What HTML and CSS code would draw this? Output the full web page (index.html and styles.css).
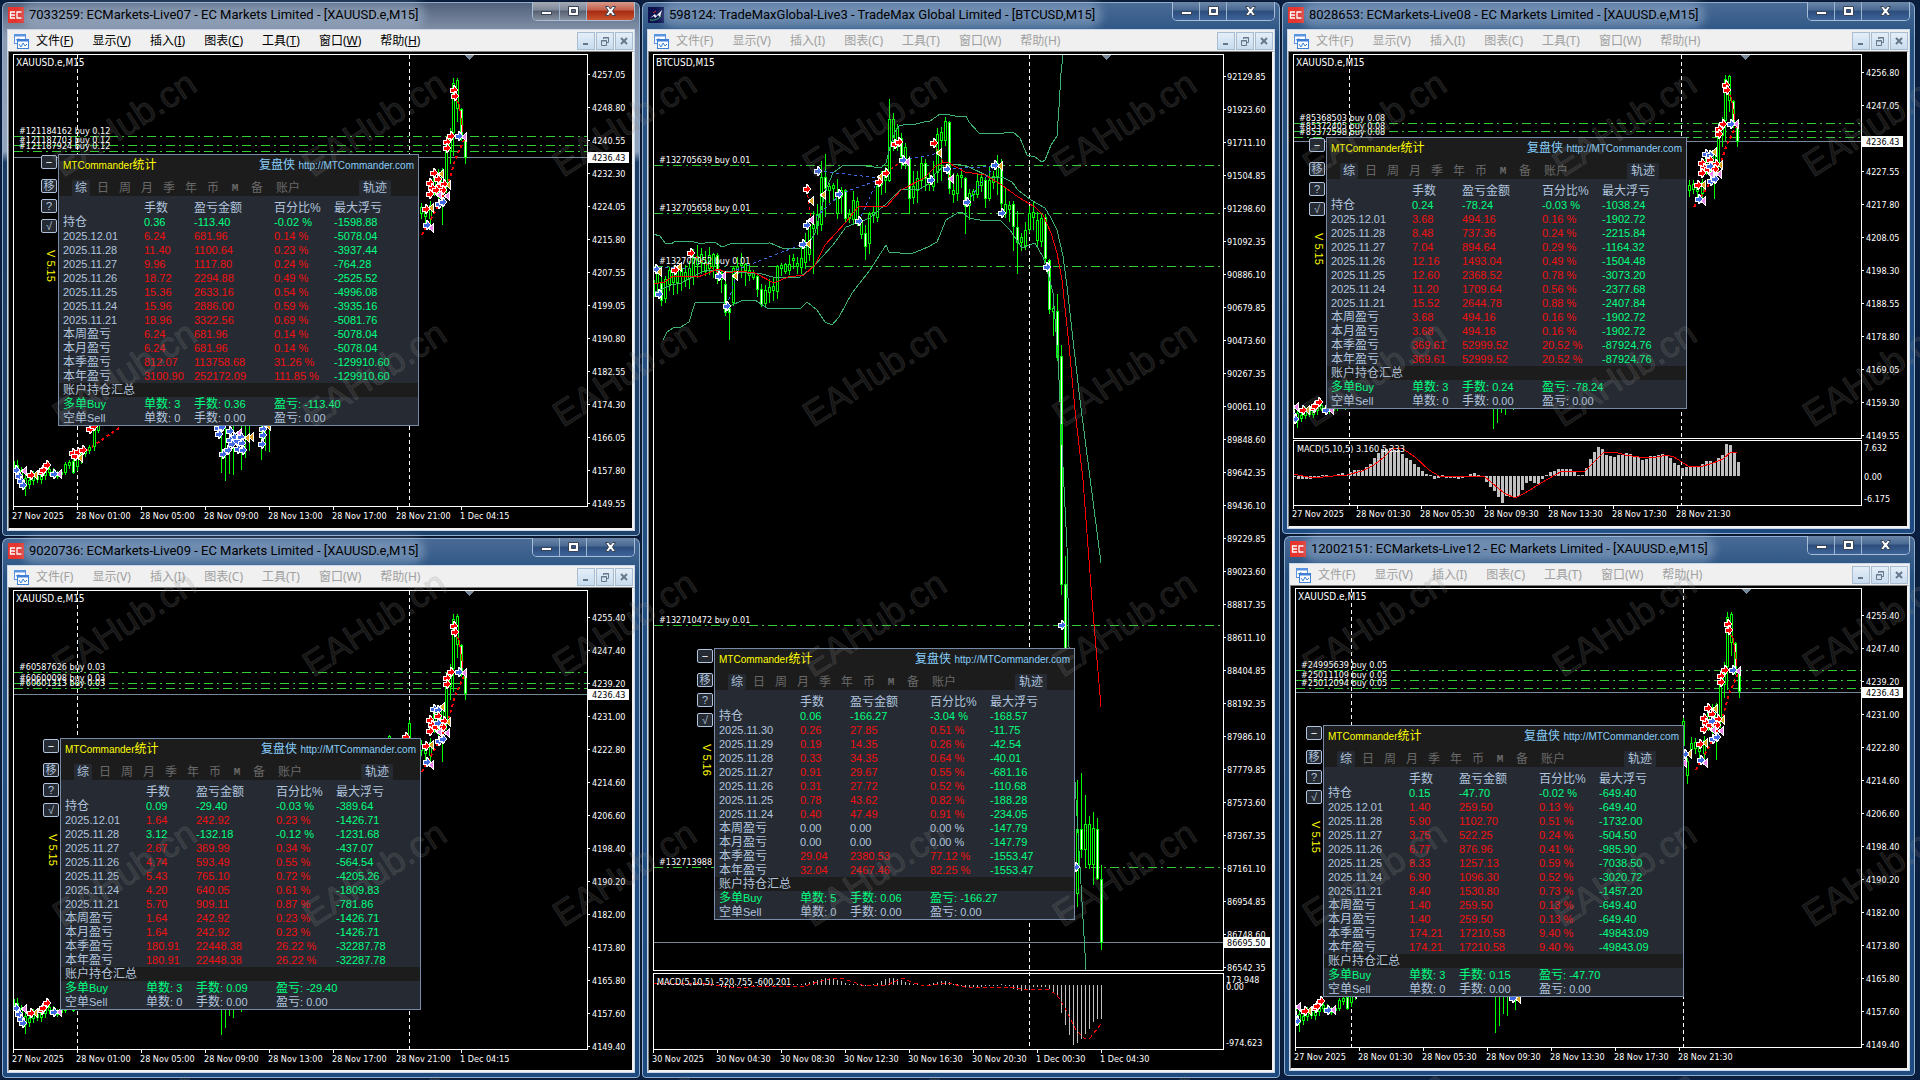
FILE: index.html
```html
<!DOCTYPE html>
<html lang="zh-CN">
<head>
<meta charset="utf-8">
<title>MetaTrader 4 - MTCommander</title>
<link rel="stylesheet" href="styles.css">
</head>
<body>
<main class="desktop">
  <div class="column" id="column-left"></div>
  <div class="column" id="column-middle"></div>
  <div class="column" id="column-right"></div>
</main>
<svg class="watermark" id="watermark" aria-hidden="true"></svg>
<script src="script.js"></script>
</body>
</html>
```
FILE: styles.css
```css
* { box-sizing: border-box; }

body {
  margin: 0;
  background: #0a1f3f;
  font-family: "Noto Sans", "Noto Sans CJK SC", sans-serif;
  font-size: 12px;
}

button { font: inherit; margin: 0; padding: 0; border: 0; background: none; color: inherit; }

/* desktop */
.desktop {
  display: grid;
  grid-template-columns: 640fr 640fr 635fr;
  min-height: 100vh;
  padding: 1px 4px 1px 1px;
  overflow: hidden;
}
.column { display: flex; flex-direction: column; min-width: 0; }

/* window frame */
.window {
  display: flex;
  flex-direction: column;
  min-width: 0;
  padding: 0 5px 5px;
  border: 1px solid #0b1930;
  border-radius: 7px 7px 5px 5px;
  background: linear-gradient(180deg, #4a6b96 0, #26507f 40px, #1e4a80 100%);
  box-shadow: inset 0 0 0 1px #8fb0d2;
}
.window.active { background: linear-gradient(180deg, #51607a 0, #8b9ab0 34px, #93a5bd 28%, #1d3c63 30%, #1f4169 100%); }
.win-live07 { flex: 536 1 0; }
.win-live09 { flex: 542 1 0; }
.win-live3 { flex: 1 1 0; }
.win-live08 { flex: 534 1 0; }
.win-live12 { flex: 542 1 0; margin-left: 2px; margin-bottom: 2px; }

.titlebar { display: flex; align-items: flex-start; height: 27px; }
.app-icon { width: 16px; height: 16px; margin: 5px 0 0 1px; flex: none; }
.title {
  margin: 7px 0 0 5px;
  font-family: Roboto, "Noto Sans", sans-serif;
  font-size: 13px;
  font-weight: 400;
  line-height: 12px;
  white-space: nowrap;
  color: #000;
  border-radius: 6px;
  background: rgba(180, 200, 225, .4);
  box-shadow: 0 0 8px 7px rgba(180, 200, 225, .4);
}
.caption {
  display: flex;
  margin-left: auto;
  border: 1px solid #a8bdd6;
  border-top: 0;
  border-radius: 0 0 5px 5px;
  overflow: hidden;
}
.caption button {
  width: 27px;
  height: 18px;
  background: linear-gradient(180deg, #6c86a8 0, #4a6a93 45%, #2c4d7c 50%, #3e649a 100%);
  border-right: 1px solid #9db4cf;
}
.caption .close { width: 47px; border-right: 0; }
.active .caption button { background: linear-gradient(180deg, #a5abb6 0, #7e8796 45%, #565f70 50%, #8690a1 100%); }
.active .caption .close { background: linear-gradient(180deg, #d99a8c 0, #c25e48 45%, #a52a12 50%, #c9542e 100%); }
.caption svg { display: block; margin: auto; }

.client {
  display: flex;
  flex-direction: column;
  flex: 1;
  border: 1px solid #c9d8e8;
  background: #000;
}

/* menu bar */
.menubar {
  display: flex;
  align-items: center;
  height: 21px;
  padding: 0 1px 0 5px;
  background: #f0f0f0;
  color: #a0a0a0;
  line-height: 18px;
}
.menu-icon { width: 16px; height: 16px; margin-right: 7px; flex: none; }
.menus { display: flex; gap: 19px; white-space: nowrap; }
.active .menubar { color: #000; }
.active .menus u { text-decoration: underline; }
.menus u { text-decoration: none; }
.mdi { display: flex; gap: 1px; margin-left: auto; }
.mdi button {
  width: 18px;
  height: 18px;
  border: 1px solid #a9bdd2;
  background: linear-gradient(180deg, #e4eef8, #c9dcee);
}
.mdi svg { display: block; margin: auto; }

/* chart area */
.chart {
  position: relative;
  flex: 1;
  border: solid #808080;
  border-width: 1px 2px 2px 1px;
  border-right-color: #f2f2f2;
  border-bottom-color: #f2f2f2;
  background: #000;
}
.plot {
  position: absolute;
  inset: 0;
  width: 100%;
  height: 100%;
  font-family: "DejaVu Sans Condensed", "DejaVu Sans", sans-serif;
  font-stretch: condensed;
  font-size: 9px;
}
.plot text { fill: #fff; }
.plot .tag-text { fill: #000; }
.plot .symbol { font-size: 10px; }
.edge { fill: none; stroke: #fff; }
.period { stroke: #fff; stroke-dasharray: 4 3; }
.order { stroke: #32cd32; stroke-dasharray: 9 4 2 4; }
.bid { stroke: #778899; }
.tag { fill: #fff; }
.wick { stroke: #0f0; }
.body { stroke: #0f0; fill: #000; }
.body.down { fill: #fff; }
.band, .average, .signal { fill: none; stroke-width: 1; }
.band { stroke: #3cb371; }
.average, .signal { stroke: #f00; }
.dashed { stroke-dasharray: 4 3; }
.trail { fill: none; stroke-dasharray: 3 3; }
.bar { fill: #c0c0c0; }

/* statistics panel */
.tool {
  position: absolute;
  display: flex;
  align-items: flex-start;
  gap: 1px;
  font-family: "Liberation Sans", "Noto Sans CJK SC", sans-serif;
  color: #b0c4de;
}
.side { display: flex; flex-direction: column; gap: 6px; width: 16px; padding-top: 1px; }
.side button {
  width: 16px;
  height: 14px;
  border: 1px solid #b0c4de;
  border-radius: 2px;
  background: #262b33;
  font-size: 11px;
  line-height: 11px;
}
.side .fold { margin-bottom: 4px; color: #fff; }
.version { margin: 11px 0 0 3px; writing-mode: vertical-rl; font-size: 11px; line-height: 12px; color: #ff0; white-space: nowrap; }
.panel { width: 361px; border: 1px solid #778ba8; background: #262b33; }
.panel-head { height: 41px; background: #1c1c1c; }
.brand { display: flex; justify-content: space-between; padding: 2px 4px 0; line-height: 16px; font-size: 12px; }
.brand small { font-size: 10px; }
.brand .name { color: #ff0; }
.brand a { color: #87cefa; text-decoration: none; }
.tabs { display: flex; gap: 4px; margin: 6px 0 0 13px; font-size: 12px; line-height: 16px; color: #696969; }
.tabs button { width: 18px; height: 16px; border-radius: 2px; }
.tabs .latin { font-family: "Liberation Mono", monospace; font-size: 11px; font-weight: 700; }
.tabs .account { width: 36px; }
.tabs .track { width: 32px; margin: 0 27px 0 auto; }
.tabs .track, .tabs .on { background: #262b33; color: #b0c4de; }
.stats { width: 100%; margin-top: 5px; border-collapse: collapse; table-layout: fixed; font-size: 11px; line-height: 14px; }
.stats th, .stats td { height: 14px; padding: 0; font-weight: 400; text-align: left; white-space: nowrap; }
.stats th { font-size: 12px; }
.stats th:first-child { padding-left: 4px; }
.stats .date { font-size: 11px; }
.stats .c1 { width: 85px; }
.stats .c2 { width: 50px; }
.stats .c3 { width: 80px; }
.stats .c4 { width: 60px; }
.stats .summary { background: #1c1c1c; }
.red { color: #f01010; }
.green { color: #00ff7f; }
.stats b { font-size: 12px; font-weight: 400; }

/* watermark laid over everything */
.watermark {
  position: absolute;
  inset: 0;
  width: 100%;
  height: 100%;
  pointer-events: none;
  font-family: "Liberation Sans", sans-serif;
  font-size: 36px;
}
.watermark text { fill: rgba(140, 140, 140, .18); stroke: rgba(140, 140, 140, .18); stroke-width: 1; }
```
FILE: script.js
```js
// ---------- icons ----------
const EC_ICON = '<svg class="app-icon" viewBox="0 0 16 16"><rect width="16" height="16" fill="#e5352d"/><path d="M7 5H2.500v6H7M2.500 8H7M13.500 5H9v6h4.500" fill="none" stroke="#fff" stroke-width="1.300"/></svg>';
const TM_ICON = '<svg class="app-icon" viewBox="0 0 16 16"><rect width="16" height="16" fill="#0c1250"/><path d="M2 11l5-4 1 2 6-6-2 7-2-2-3 3-1-2z" fill="#fff"/><path d="M2 13q7 1 11-4" fill="none" stroke="#3fae6a"/><path d="M5 6l3-2" stroke="#d8322c"/></svg>';
const MENU_ICON = '<svg class="menu-icon" viewBox="0 0 16 16"><rect x="1.500" y="1.500" width="11" height="9" fill="#fff" stroke="#5a94e0"/><path d="M1 2.500h12" stroke="#5a94e0" stroke-width="2"/><path d="M3 6l1.500 2L6 5" fill="none" stroke="#5a94e0"/><rect x="4.500" y="6.500" width="11" height="9" fill="#fff" stroke="#3f7fd8"/><path d="M4 7.500h12" stroke="#3f7fd8" stroke-width="2"/><path d="M6 11l2 3 2-4 2 3 2-2" fill="none" stroke="#3f7fd8"/></svg>';
const CAPTION = `
<div class="caption">
  <button aria-label="最小化"><svg width="13" height="12"><rect x="1.500" y="6.500" width="10" height="3" fill="#fff" stroke="#3a4456"/></svg></button>
  <button aria-label="最大化"><svg width="13" height="12"><path d="M1.500 1.500h10v9h-10zM4.500 4.500v3h4v-3z" fill="#fff" fill-rule="evenodd" stroke="#3a4456"/></svg></button>
  <button class="close" aria-label="关闭"><svg width="13" height="12"><path d="M1.500 1.500h3l2 2.500 2-2.500h3L8.500 6l3 4.500h-3l-2-2.500-2 2.500h-3l3-4.500z" fill="#fff" stroke="#3a4456"/></svg></button>
</div>`;
const MDI = `
<div class="mdi">
  <button aria-label="最小化图表"><svg width="12" height="12"><path d="M3 9h5" stroke="#66788c" stroke-width="2"/></svg></button>
  <button aria-label="还原图表"><svg width="12" height="12"><path d="M4.500 4V2.500h5v5H8M4 3h6M2.500 5.500h5v5h-5zM2 6h6" fill="none" stroke="#66788c"/></svg></button>
  <button aria-label="关闭图表"><svg width="12" height="12"><path d="M3 3l6 6M9 3l-6 6" stroke="#66788c" stroke-width="2"/></svg></button>
</div>`;
const MENUS = [['文件', 'F'], ['显示', 'V'], ['插入', 'I'], ['图表', 'C'], ['工具', 'T'], ['窗口', 'W'], ['帮助', 'H']];

// ---------- gold bars: x, high, open/close range, low, down? ----------
const GOLD_BARS = [
  [13, 457, 461, 468, 470], [17, 459, 465, 470, 478], [21, 466, 470, 480, 486], [25, 472, 478, 486, 495], [29, 474, 480, 484, 488],
  [33, 470, 474, 480, 484], [37, 472, 476, 479, 482], [41, 470, 473, 479, 483], [45, 462, 468, 475, 479], [49, 466, 469, 472, 475],
  [53, 467, 471, 475, 478], [57, 470, 472, 476, 478], [61, 470, 472, 474, 476], [65, 461, 464, 472, 474], [69, 459, 462, 465, 468],
  [73, 458, 461, 472, 473, 1], [77, 452, 455, 466, 470], [81, 450, 453, 458, 463], [85, 448, 450, 453, 456], [89, 444, 447, 450, 453],
  [94, 424, 428, 446, 450], [98, 418, 422, 430, 432],
  [389, 197, 199, 210, 215], [409, 182, 186, 210, 215], [413, 222, 226, 240, 248], [417, 201, 208, 214, 222], [421, 202, 207, 213, 218], [425, 205, 208, 216, 224],
  [430, 200, 205, 218, 223], [434, 170, 176, 190, 195], [438, 168, 172, 190, 200], [442, 167, 170, 184, 224], [446, 145, 150, 182, 192],
  [450, 127, 134, 150, 163], [453, 77, 83, 132, 155], [457, 77, 80, 108, 121], [461, 107, 109, 135, 140, 1], [465, 133, 138, 157, 163, 1]
];
const GOLD_LOWS_A = [[221, 472], [225, 480], [229, 473], [233, 474], [241, 469], [245, 457], [249, 450], [261, 459], [265, 450], [269, 451]];
const GOLD_LOWS_B = [[221, 496], [225, 489], [229, 477], [233, 479], [241, 473], [245, 462], [261, 460]];

const R = 'red', B = 'royalblue', O = 'goldenrod', P = 'violet';
const GOLD_MARKS = [
  [B, 16, 470], [P, 24, 471], [B, 19, 476], [B, 21, 481], [B, 23, 485], [O, 35, 475], [R, 31, 475], [R, 42, 472], [R, 43, 470], [R, 47, 465],
  [P, 59, 474], [B, 54, 474], [R, 73, 453], [R, 75, 456], [O, 80, 458], [R, 78, 452], [R, 83, 450], [R, 90, 429], [R, 94, 426],
  [R, 454, 90], [R, 455, 96], [P, 464, 137], [B, 459, 136], [R, 451, 136], [R, 447, 142], [R, 447, 148],
  [O, 448, 185], [R, 430, 183], [R, 432, 188], [R, 438, 179], [R, 440, 186], [R, 444, 184], [R, 430, 194], [R, 436, 190], [R, 443, 190],
  [P, 439, 195], [P, 447, 196], [O, 431, 208], [R, 426, 209], [P, 431, 228], [B, 427, 225], [B, 439, 204], [B, 443, 202]
];
const GOLD_PIT = [
  [B, 218, 428], [B, 222, 427], [B, 219, 434], [B, 230, 431], [P, 239, 433], [B, 234, 437], [B, 230, 440], [B, 237, 441], [O, 251, 437], [O, 247, 438],
  [B, 241, 437], [B, 232, 444], [B, 242, 443], [B, 228, 450], [B, 238, 449], [B, 243, 450], [B, 223, 454], [O, 268, 426], [B, 263, 429], [B, 263, 435], [B, 262, 444]
];
const TOP_RED = [[R, 434, 173], [O, 441, 174]];
const TOP_BLUE = [[O, 442, 170], [B, 434, 172], [B, 438, 173]];

// ---------- bitcoin bars, one every 4px: high, body, low, down? ----------
const BTC_BARS = [
  [268,280,296,300],[265,268,283,292],[272,283,300,305,1],[275,279,298,302],[266,270,284,290],[268,271,282,294],[264,270,282,293],[262,268,276,290],
  [264,272,280,286],[260,268,278,288],[248,258,276,284],[244,256,264,277],[247,254,262,273],[250,262,271,275],[246,255,268,274],[252,254,266,277],
  [252,255,278,283,1],[270,273,279,292],[280,284,312,315,1],[304,308,312,339,1],[265,268,302,305],[256,266,273,276],[252,263,265,277],[262,264,270,285],
  [264,270,275,280],[269,273,277,279],[274,276,289,296,1],[283,289,304,306,1],[284,290,303,306],[278,287,292,302],[276,286,290,300],[264,266,291,298],
  [262,265,268,275],[262,264,271,273],[254,264,270,274],[253,258,260,268],[256,263,266,273],[244,258,267,273],[232,244,262,268],[222,224,254,260],
  [210,224,228,273],[203,214,225,234],[160,177,224,230],[153,177,188,216,1],[182,186,190,202],[182,185,188,200],[178,192,213,218],[186,190,196,213],
  [188,190,218,222,1],[208,214,218,222],[190,200,219,223],[196,201,220,225],[217,222,234,238],[224,233,246,259,1],[211,214,243,253],[206,212,215,222],
  [183,186,217,221],[170,180,184,194],[166,170,180,192],[98,119,180,181],[112,119,140,150],[123,128,142,150],[132,138,156,168,1],[142,147,163,168],
  [155,158,198,213,1],[170,186,197,203],[170,178,190,202],[155,163,180,188],[158,163,178,190,1],[172,182,184,190],[160,176,186,190],[127,134,172,182],
  [126,132,140,180],[116,121,140,145],[120,122,188,193,1],[172,190,194,202],[172,175,193,200],[167,175,177,187],[176,178,206,233,1],[188,193,205,219],
  [188,191,194,200],[172,181,194,197],[174,177,185,191],[176,180,198,207,1],[166,180,198,200],[170,176,182,188],[154,163,176,194],[158,166,203,207,1],
  [186,204,213,217],[200,205,209,221],[200,204,226,250,1],[210,227,242,273,1],[232,237,242,250],[221,230,245,249],[205,213,229,232],[200,212,217,229],
  [211,220,240,245],[213,218,241,246],[213,217,258,262,1],[258,260,309,313,1],[293,308,311,335],[293,311,357,360,1],[344,356,584,594,1],[555,584,760,770,1],
  [700,710,760,790],[760,780,800,850],[779,829,893,906],[772,829,849,857,1],[794,824,849,867],[815,824,864,868],[811,828,864,884],[817,829,878,879,1],[864,879,942,949,1]
];
const BTC_LINES = [
  ['band', '653,234 660,236 665,243 671,244 676,241 694,242 702,244 708,242 716,243 722,247 730,244 770,243 782,248 800,248 807,247 815,233 821,210 827,187 833,173 842,166 846,165 866,166 881,168 886,163 890,147 895,132 899,126 907,124 912,125 924,122 930,121 940,114 946,114 959,117 966,116 969,122 979,133 988,134 1004,133 1013,132 1020,138 1027,155 1035,157 1042,162 1045,160 1051,145 1057,136 1059,107 1061,73 1063,55'],
  ['band', '653,293 671,285 681,283 706,270 722,271 747,273 759,273 776,278 800,277 813,267 833,245 846,227 870,218 887,203 900,190 920,189 928,184 936,173 944,166 957,164 969,167 990,177 1002,177 1012,182 1018,190 1031,200 1045,208 1051,218 1057,230 1063,256 1067,286 1073,340 1080,400 1089,470 1101,563'],
  ['average', '653,284 665,282 673,276 698,277 718,269 728,273 739,271 755,273 774,283 788,277 804,275 815,265 825,245 846,222 858,207 887,206 901,190 924,178 936,166 944,162 949,163 965,172 985,175 1002,185 1018,197 1035,207 1043,215 1051,233 1057,253 1062,280 1069,345 1075,410 1083,480 1092,600 1101,707'],
  ['band', '663,340 667,332 673,328 681,327 689,322 695,303 700,302 724,302 728,307 743,300 755,300 767,308 800,309 807,302 817,310 825,322 832,325 839,317 852,293 870,270 886,245 889,252 911,254 928,247 937,242 946,220 959,212 963,213 969,218 985,221 1000,220 1010,230 1022,248 1035,243 1043,257 1049,277 1053,293 1058,358 1063,467 1067,547 1069,647 1075,782 1080,867 1086,970']
];
const BTC_TRAILS = [
  [B, '659,267 690,269'], [B, '736,270 803,244'], [B, '727,306 736,276'], [B, '807,225 839,196'], [B, '818,171 880,178'], [B, '839,194 879,180'],
  [B, '859,221 879,177'], [B, '903,160 939,153'], [B, '967,202 995,165'], [B, '947,169 1000,166'], [R, '807,189 811,220'], [R, '886,173 903,160'],
  [R, '934,143 951,179'], [R, '691,253 723,276']
];
const BTC_MARKS = [
  [O,659,272],[B,656,269],[B,659,294],[O,679,267],[R,675,270],[R,691,253],[P,723,276],[B,719,276],[O,735,276],[B,727,306],[O,808,244],[B,803,244],
  [P,811,220],[B,807,225],[O,811,201],[R,807,189],[O,823,195],[B,818,171],[B,839,194],[B,859,221],[O,880,177],[R,879,182],[R,886,173],[R,895,144],[R,899,142],
  [P,907,162],[B,903,160],[O,939,153],[R,934,143],[B,931,180],[P,951,179],[B,947,169],[B,967,202],[O,1000,166],[B,995,165],[B,1002,213],[B,1047,267],[B,1062,625],[B,1076,867]
];

// ---------- MACD histograms ----------
const GOLD_MACD = [1,3,3,3,3,2,1,-1,-1,1,-1,-2,-3,-1,-4,-6,-6,-6,-9,-12,-18,-23,-27,-27,-28,-26,-26,-22,-18,-16,-12,-9,-5,-2,-1,3,2,-1,2,2,2,3,2,1,-2,-3,-1,1,6,11,15,21,27,20,21,21,20,14,7,5,7,8,3,-1,-4,-5,-7,-7,-7,-7,-5,-1,-1,-8,-17,-24,-29,-27,-21,-20,-19,-21,-21,-23,-22,-19,-19,-16,-17,-20,-20,-21,-22,-20,-18,-13,-11,-8,-9,-10,-10,-9,-12,-15,-15,-13,-18,-21,-32,-31,-23,-14];
const GOLD_SIGNAL = '1293,474 1313,478 1333,476 1347,475 1362,471 1374,465 1384,457 1392,449 1402,448 1415,457 1429,470 1439,476 1468,477 1484,476 1492,483 1504,493 1515,498 1525,493 1541,483 1562,471 1584,472 1596,460 1604,452 1615,452 1625,455 1639,457 1653,458 1666,455 1674,457 1688,466 1700,467 1713,463 1723,459 1731,452 1737,452';
const BTC_MACD = [-2,-2,-1,-1,-1,-1,-1,-1,-1,-2,-3,-3,-2,-2,-1,-1,1,2,3,3,2,1,1,1,1,1,1,2,1,1,1,0,0,-1,-1,-1,-1,-1,-2,-3,-4,-5,-6,-7,-7,-7,-5,-4,-2,-1,-1,-1,1,1,1,-1,-2,-4,-6,-7,-7,-6,-5,-3,-2,-1,-1,0,0,-1,-2,-3,-4,-4,-3,-1,-1,1,3,3,2,2,2,1,1,1,1,-1,1,1,4,5,6,5,4,2,2,2,2,4,8,12,28,40,50,60,58,54,49,44,37,34,34];
const BTC_SIGNAL = '653,983 702,983 722,986 739,988 763,986 805,986 821,981 833,978 842,978 850,981 862,985 887,985 903,978 911,982 924,986 948,983 965,987 981,988 1010,987 1027,990 1047,989 1057,995 1066,1010 1076,1030 1084,1038 1090,1038 1101,1024';

// ---------- windows ----------
const W4_PRICES = '4255.40 4247.40 4239.20 4231.00 4222.80 4214.60 4206.60 4198.40 4190.20 4182.00 4173.80 4165.80 4157.60 4149.40';
const DAYS = ['2025.12.01', '2025.11.28', '2025.11.27', '2025.11.26', '2025.11.25', '2025.11.24', '2025.11.21'];
const WINDOWS = [
  {
    column: 'left', name: 'live07', active: true, icon: EC_ICON, title: '7033259: ECMarkets-Live07 - EC Markets Limited - [XAUUSD.e,M15]', symbol: 'XAUUSD.e,M15',
    origin: [9, 52], plot: [13, 54, 587, 506], timeY: 515, priceY: 74,
    prices: '4257.05 4248.80 4240.55 4232.30 4224.05 4215.80 4207.55 4199.05 4190.80 4182.55 4174.30 4166.05 4157.80 4149.55', bid: ['4236.43', 157],
    times: '27 Nov 2025|28 Nov 01:00|28 Nov 05:00|28 Nov 09:00|28 Nov 13:00|28 Nov 17:00|28 Nov 21:00|1 Dec 04:15', periods: [77, 409], pointer: 469,
    orders: [['#121184162 buy 0.12', 136], ['#121187703 buy 0.12', 145], ['#121187924 buy 0.12', 151]],
    gold: { dx: 0, y0: 74, from: 74, k: 1, lows: GOLD_LOWS_A, marks: [...TOP_RED, ...GOLD_MARKS, ...GOLD_PIT] },
    panel: [49, 102], version: 'V 5.15', days: DAYS,
    rows: ['0.36 -113.40 -0.02 -1598.88', '6.24 681.96 0.14 -5078.04', '11.40 1100.64 0.23 -3937.44', '9.96 1117.80 0.24 -764.28', '18.72 2294.88 0.49 -2525.52', '15.36 2633.16 0.54 -4996.08', '15.96 2886.00 0.59 -3935.16', '18.96 3322.56 0.69 -5081.76', '6.24 681.96 0.14 -5078.04', '6.24 681.96 0.14 -5078.04', '812.07 113758.68 31.26 -129910.60', '3100.90 252172.09 111.85 -129910.60'],
    count: 3
  },
  {
    column: 'left', name: 'live09', icon: EC_ICON, title: '9020736: ECMarkets-Live09 - EC Markets Limited - [XAUUSD.e,M15]', symbol: 'XAUUSD.e,M15',
    origin: [9, 588], plot: [13, 590, 587, 1049], timeY: 1058, priceY: 617, prices: W4_PRICES, bid: ['4236.43', 694],
    times: '27 Nov 2025|28 Nov 01:00|28 Nov 05:00|28 Nov 09:00|28 Nov 13:00|28 Nov 17:00|28 Nov 21:00|1 Dec 04:15', periods: [77, 409], pointer: 469,
    orders: [['#60587626 buy 0.03', 672], ['#60600098 buy 0.03', 683], ['#60601313 buy 0.03', 688]],
    gold: { dx: 0, y0: 617, from: 81, k: 1.006, lows: GOLD_LOWS_B, marks: [...TOP_BLUE, ...GOLD_MARKS, [R, 406, 200], [B, 438, 186]] },
    panel: [51, 150], version: 'V 5.15', days: DAYS,
    rows: ['0.09 -29.40 -0.03 -389.64', '1.64 242.92 0.23 -1426.71', '3.12 -132.18 -0.12 -1231.68', '2.67 369.99 0.34 -437.07', '4.74 593.49 0.55 -564.54', '5.43 765.10 0.72 -4205.26', '4.20 640.05 0.61 -1809.83', '5.70 909.11 0.87 -781.86', '1.64 242.92 0.23 -1426.71', '1.64 242.92 0.23 -1426.71', '180.91 22448.38 26.22 -32287.78', '180.91 22448.38 26.22 -32287.78'],
    count: 3
  },
  {
    column: 'middle', name: 'live3', icon: TM_ICON, title: '598124: TradeMaxGlobal-Live3 - TradeMax Global Limited - [BTCUSD,M15]', symbol: 'BTCUSD,M15',
    origin: [649, 52], plot: [653, 54, 1223, 970], timeY: 1058, priceY: 76,
    prices: '92129.85 91923.60 91711.10 91504.85 91298.60 91092.35 90886.10 90679.85 90473.60 90267.35 90061.10 89848.60 89642.35 89436.10 89229.85 89023.60 88817.35 88611.10 88404.85 88192.35 87986.10 87779.85 87573.60 87367.35 87161.10 86954.85 86748.60 86542.35', bid: ['86695.50', 942],
    times: '30 Nov 2025|30 Nov 04:30|30 Nov 08:30|30 Nov 12:30|30 Nov 16:30|30 Nov 20:30|1 Dec 00:30|1 Dec 04:30', periods: [1029], pointer: 1106,
    orders: [['#132705639 buy 0.01', 165], ['#132705658 buy 0.01', 213], ['#132707952 buy 0.01', 266], ['#132710472 buy 0.01', 625], ['#132713988', 867]],
    btc: true,
    macd: { box: [973, 1049], zero: 985, x: 653, width: 1, bars: BTC_MACD, signal: BTC_SIGNAL, dashed: true, label: 'MACD(5,10,5) -520.755 -600.201', scale: [['173.948', 979], ['0.00', 986], ['-974.623', 1042]] },
    panel: [65, 596], version: 'V 5.16', days: ['2025.11.30', '2025.11.29', '2025.11.28', '2025.11.27', '2025.11.26', '2025.11.25', '2025.11.24'],
    rows: ['0.06 -166.27 -3.04 -168.57', '0.26 27.85 0.51 -11.75', '0.19 14.35 0.26 -42.54', '0.33 34.35 0.64 -40.01', '0.91 29.67 0.55 -681.16', '0.31 27.72 0.52 -110.68', '0.78 43.62 0.82 -188.28', '0.40 47.49 0.91 -234.05', '0.00 0.00 0.00 -147.79', '0.00 0.00 0.00 -147.79', '29.04 2380.53 77.12 -1553.47', '32.04 2467.46 82.25 -1553.47'],
    count: 5
  },
  {
    column: 'right', name: 'live08', icon: EC_ICON, title: '8028653: ECMarkets-Live08 - EC Markets Limited - [XAUUSD.e,M15]', symbol: 'XAUUSD.e,M15',
    origin: [1289, 52], plot: [1293, 54, 1861, 438], timeY: 513, priceY: 72,
    prices: '4256.80 4247.05 - 4227.55 4217.80 4208.05 4198.30 4188.55 4178.80 4169.05 4159.30 4149.55', bid: ['4236.43', 141],
    times: '27 Nov 2025|28 Nov 01:30|28 Nov 05:30|28 Nov 09:30|28 Nov 13:30|28 Nov 17:30|28 Nov 21:30', periods: [1349, 1681], pointer: 1745,
    orders: [['#85368503 buy 0.08', 123], ['#85372405 buy 0.08', 131], ['#85372598 buy 0.08', 137]],
    gold: { dx: 1272, y0: 72, from: 75, k: .846, lows: GOLD_LOWS_B, marks: [...TOP_BLUE, ...GOLD_MARKS, [B, 438, 186]] },
    macd: { box: [440, 505], zero: 476, x: 1293, width: 3, bars: GOLD_MACD, signal: GOLD_SIGNAL, label: 'MACD(5,10,5) 3.160 5.333', scale: [['7.632', 447], ['0.00', 476], ['-6.175', 498]] },
    panel: [37, 85], version: 'V 5.15', days: DAYS,
    rows: ['0.24 -78.24 -0.03 -1038.24', '3.68 494.16 0.16 -1902.72', '8.48 737.36 0.24 -2215.84', '7.04 894.64 0.29 -1164.32', '12.16 1493.04 0.49 -1504.48', '12.60 2368.52 0.78 -3073.20', '11.20 1709.64 0.56 -2377.68', '15.52 2644.78 0.88 -2407.84', '3.68 494.16 0.16 -1902.72', '3.68 494.16 0.16 -1902.72', '369.61 52999.52 20.52 -87924.76', '369.61 52999.52 20.52 -87924.76'],
    count: 3
  },
  {
    column: 'right', name: 'live12', icon: EC_ICON, title: '12002151: ECMarkets-Live12 - EC Markets Limited - [XAUUSD.e,M15]', symbol: 'XAUUSD.e,M15',
    origin: [1291, 586], plot: [1295, 588, 1861, 1047], timeY: 1056, priceY: 615, prices: W4_PRICES, bid: ['4236.43', 692],
    times: '27 Nov 2025|28 Nov 01:30|28 Nov 05:30|28 Nov 09:30|28 Nov 13:30|28 Nov 17:30|28 Nov 21:30', periods: [1351, 1683], pointer: 1746,
    orders: [['#24995639 buy 0.05', 670], ['#25011109 buy 0.05', 680], ['#25012094 buy 0.05', 688]],
    gold: { dx: 1274, y0: 615, from: 81, k: 1.006, lows: GOLD_LOWS_B, marks: [...TOP_RED, ...GOLD_MARKS, [O, 415, 219], [B, 411, 219], [P, 410, 228], [B, 438, 186], [O, 244, 463], [B, 239, 462]] },
    panel: [32, 139], version: 'V 5.15', days: DAYS,
    rows: ['0.15 -47.70 -0.02 -649.40', '1.40 259.50 0.13 -649.40', '5.90 1102.70 0.51 -1732.00', '3.75 522.25 0.24 -504.50', '6.77 876.96 0.41 -985.90', '8.33 1257.13 0.59 -7038.50', '6.90 1096.30 0.52 -3020.72', '8.40 1530.80 0.73 -1457.20', '1.40 259.50 0.13 -649.40', '1.40 259.50 0.13 -649.40', '174.21 17210.58 9.40 -49843.09', '174.21 17210.58 9.40 -49843.09'],
    count: 3
  }
];

// ---------- chart drawing ----------
const text = (x, y, s, cls = '') => `<text class="${cls}" x="${x}" y="${y + 4}">${s}</text>`;
const line = (cls, x1, y1, x2, y2) => `<path class="${cls}" d="M${x1 + .5} ${y1 + .5}L${x2 + .5} ${y2 + .5}"/>`;
const poly = (cls, points, attr = '') => `<polyline class="${cls}" points="${points}" ${attr}/>`;
const candle = (x, high, top, bottom, low, down) =>
  line('wick', x, high, x, low) + `<rect class="body ${down ? 'down' : ''}" x="${x - .5}" y="${top + .5}" width="2" height="${Math.max(1, bottom - top)}"/>`;
const mark = ([color, x, y]) => {
  const d = color === O || color === P ? 'M2.500-4.500v9L-2.500 0z' : 'M-4-2h3v-2.500h1L4 0 0 4.500h-1V2h-3z';
  return `<path d="${d}" fill="${color}" stroke="#fff" transform="translate(${x} ${y})"/>`;
};

function goldChart({ dx, y0, from, k, lows, marks }) {
  const y = v => Math.round(y0 + (v - from) * k);
  return poly('trail', [[77, 457], [122, 426]].map(p => [p[0] + dx, y(p[1])]).join(' '), 'stroke="red" stroke-width="2"')
    + lows.map(([x, low]) => line('wick', x + dx, y(400), x + dx, y(low))).join('')
    + GOLD_BARS.map(([x, h, t, b, l, d]) => candle(x + dx, y(h), y(t), y(b), y(l), d)).join('')
    + poly('trail', [[422, 235], [436, 210], [447, 188], [455, 160], [464, 140]].map(p => [p[0] + dx, y(p[1])]).join(' '), 'stroke="red" stroke-width="2"')
    + poly('average', [[455, 98], [459, 104], [463, 132]].map(p => [p[0] + dx, y(p[1])]).join(' '), 'stroke-width="2"')
    + marks.map(([c, x, v]) => mark([c, x + dx, y(v)])).join('');
}

function btcChart() {
  return BTC_BARS.map((b, i) => candle(653 + 4 * i, ...b)).join('')
    + BTC_LINES.map(([cls, points]) => poly(cls, points)).join('')
    + BTC_TRAILS.map(([color, points]) => poly('trail', points, `stroke="${color}"`)).join('')
    + BTC_MARKS.map(mark).join('');
}

function macdChart(m, x1, x2) {
  return m.bars.map((v, i) => v ? `<rect class="bar" x="${m.x + 4 * i}" y="${Math.min(m.zero, m.zero + v)}" width="${m.width}" height="${Math.abs(v)}"/>` : '').join('')
    + poly('signal' + (m.dashed ? ' dashed' : ''), m.signal)
    + text(x1 + 4, m.box[0] + 8, m.label)
    + m.scale.map(([s, y]) => text(x2 + 3, y, s)).join('')
    + `<rect class="edge" x="${x1 + .5}" y="${m.box[0] + .5}" width="${x2 - x1}" height="${m.box[1] - m.box[0]}"/>`;
}

function chart(w) {
  const [x1, y1, x2, y2] = w.plot;
  const bottom = w.macd ? w.macd.box[1] : y2;
  const digits = w.btc ? 4 : 5;
  const [bidText, bidY] = w.bid;
  return `<svg class="plot" role="img" aria-label="${w.symbol}"><g shape-rendering="crispEdges" transform="translate(${-w.origin[0]} ${-w.origin[1]})">
    ${w.periods.map(x => line('period', x, y1, x, bottom)).join('')}
    ${w.orders.map(o => line('order', x1, o[1], x2, o[1])).join('')}
    ${line('bid', x1, bidY, x2, bidY)}
    <clipPath id="clip-${w.name}"><rect x="${x1}" y="${y1}" width="${x2 - x1}" height="${y2 - y1}"/></clipPath>
    <g clip-path="url(#clip-${w.name})">${w.btc ? btcChart() : goldChart(w.gold)}</g>
    <path d="M${w.pointer - 4} ${y1 + 1}h9l-4.500 5z" fill="#778899"/>
    ${w.macd ? macdChart(w.macd, x1, x2) : ''}
    <rect class="edge" x="${x1 + .5}" y="${y1 + .5}" width="${x2 - x1}" height="${y2 - y1}"/>
    ${text(x1 + 3, y1 + 8, w.symbol, 'symbol')}
    ${w.orders.map(o => text(x1 + 6, o[1] - 6, o[0])).join('')}
    ${w.prices.split(' ').map((p, i) => p === '-' ? '' : line('edge', x2, w.priceY + 33 * i, x2 + 2, w.priceY + 33 * i) + text(x2 + digits, w.priceY + 33 * i, p)).join('')}
    <rect class="tag" x="${x2 + 1}" y="${bidY - 5}" width="${w.btc ? 46 : 41}" height="11"/>
    ${text(x2 + digits, bidY, bidText, 'tag-text')}
    ${w.times.split('|').map((t, i) => line('edge', x1 + 64 * i, bottom, x1 + 64 * i, bottom + 3) + text(x1 - 1 + 64 * i, w.timeY, t)).join('')}
  </g></svg>`;
}

// ---------- statistics panel ----------
const tone = v => (+v < 0 ? 'green' : +v > 0 ? 'red' : '');

function panel(w) {
  const labels = ['持仓', ...w.days, '本周盈亏', '本月盈亏', '本季盈亏', '本年盈亏'];
  const rows = w.rows.map((r, i) => {
    const [lots, profit, percent, drawdown] = r.split(' ');
    const c = tone(profit);
    return `<tr><th scope="row" class="${i > 0 && i < 8 ? 'date' : ''}">${labels[i]}</th><td class="${c}">${lots}</td><td class="${c}">${profit}</td><td class="${c}">${percent} %</td><td class="${tone(drawdown)}">${drawdown}</td></tr>`;
  }).join('');
  const [lots, profit] = w.rows[0].split(' ');
  const total = (cls, label, side, n, l, p) => `<tr class="${cls}"><th scope="row">${label}<span class="date">${side}</span></th><td><b>单数</b>: ${n}</td><td><b>手数</b>: ${l}</td><td colspan="2"><b>盈亏</b>: ${p}</td></tr>`;
  return `<section class="tool" style="left:${w.panel[0] - 17}px;top:${w.panel[1]}px">
    <div class="side"><button class="fold">−</button><button>移</button><button>?</button><button>√</button><span class="version">${w.version}</span></div>
    <div class="panel">
      <div class="panel-head">
        <div class="brand"><span class="name"><small>MTCommander</small>统计</span><a href="#">复盘侠 <small>http://MTCommander.com</small></a></div>
        <div class="tabs"><button class="on">综</button><button>日</button><button>周</button><button>月</button><button>季</button><button>年</button><button>币</button><button class="latin">M</button><button>备</button><button class="account">账户</button><button class="track">轨迹</button></div>
      </div>
      <table class="stats">
        <colgroup><col class="c1"><col class="c2"><col class="c3"><col class="c4"><col></colgroup>
        <tr><th></th><th>手数</th><th>盈亏金额</th><th>百分比%</th><th>最大浮亏</th></tr>
        ${rows}
        <tr class="summary"><th colspan="5">账户持仓汇总</th></tr>
        ${total('green', '多单', 'Buy', w.count, lots, profit)}
        ${total('', '空单', 'Sell', 0, '0.00', '0.00')}
      </table>
    </div>
  </section>`;
}

// ---------- assemble ----------
for (const w of WINDOWS) {
  document.getElementById('column-' + w.column).insertAdjacentHTML('beforeend', `
  <article class="window win-${w.name} ${w.active ? 'active' : ''}">
    <header class="titlebar">${w.icon}<h2 class="title">${w.title}</h2>${CAPTION}</header>
    <div class="client">
      <nav class="menubar">${MENU_ICON}<div class="menus">${MENUS.map(([m, key]) => `<button>${m}(<u>${key}</u>)</button>`).join('')}</div>${MDI}</nav>
      <div class="chart">${chart(w)}${panel(w)}</div>
    </div>
  </article>`);
}

let marks = '';
for (let y = 178; y < 1300; y += 250) {
  for (let x = -187; x < 2000; x += 250) marks += `<text transform="translate(${x} ${y}) rotate(-33)">EAHub.cn</text>`;
}
document.getElementById('watermark').innerHTML = marks;
```
